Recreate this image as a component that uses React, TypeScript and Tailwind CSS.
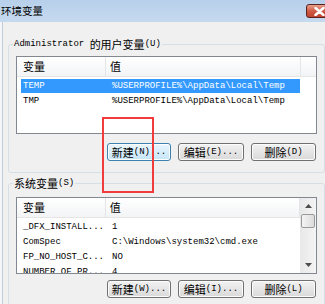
import React from "react";

type Row = { name: string; value: string };

const userRows: Row[] = [
  { name: "TEMP", value: "%USERPROFILE%\\AppData\\Local\\Temp" },
  { name: "TMP", value: "%USERPROFILE%\\AppData\\Local\\Temp" },
];

const sysRows: Row[] = [
  { name: "_DFX_INSTALL...", value: "1" },
  { name: "ComSpec", value: "C:\\Windows\\system32\\cmd.exe" },
  { name: "FP_NO_HOST_C...", value: "NO" },
  { name: "NUMBER_OF_PR...", value: "4" },
];

const mono = "font-['Liberation_Mono',monospace] text-[9px]";
const cjk = "font-['Noto_Sans_CJK_SC',sans-serif] text-[11px]";

function Arrow({ up }: { up?: boolean }) {
  return (
    <svg width="7" height="4" viewBox="0 0 7 4">
      {up ? <path d="M0 4 L3.5 0 L7 4 Z" fill="#4d4d4d" /> : <path d="M0 0 L3.5 4 L7 0 Z" fill="#4d4d4d" />}
    </svg>
  );
}

function ListView({ rows, selected, scroll, tall }: { rows: Row[]; selected?: number; scroll?: boolean; tall?: boolean }) {
  return (
    <div className={`flex w-[301px] overflow-hidden border border-[#828790] bg-white ${tall ? "h-[78px]" : "h-[77px]"}`}>
      <div className="flex min-w-0 flex-1 flex-col">
        <div className="flex h-[20px] shrink-0 border-b border-[#e5e5e5] bg-gradient-to-b from-white to-[#f3f4f6] text-black">
          <div className={`flex w-[89px] items-center border-r border-[#e3e5e8] pl-[6px] ${cjk}`}>变量</div>
          <div className={`flex w-[195px] items-center border-r border-[#e3e5e8] pl-[4px] ${cjk}`}>值</div>
          <div className="flex-1" />
        </div>
        <div className="pt-[2px]">
          {rows.map((r, i) => (
            <div key={r.name} className="flex h-[15px] items-start">
              <div
                className={`ml-[4px] flex h-[14px] w-[279px] shrink-0 items-center leading-[14px] ${mono} ${
                  i === selected ? "bg-[#3399ff] text-white" : "text-black"
                }`}
              >
                <span className="w-[89px] shrink-0 pl-[2px] whitespace-nowrap">{r.name}</span>
                <span className="pl-[2px] whitespace-nowrap">{r.value}</span>
              </div>
            </div>
          ))}
        </div>
      </div>
      {scroll ? (
        <div className="flex w-[16px] shrink-0 flex-col bg-gradient-to-r from-[#e8e8e8] to-[#f4f4f4]">
          <div className="flex h-[16px] items-center justify-center">
            <Arrow up />
          </div>
          <div className="mx-[1px] h-[14px] rounded-[2px] border border-[#9a9a9a] bg-gradient-to-r from-[#f4f4f4] to-[#dcdcdc]" />
          <div className="flex-1" />
          <div className="flex h-[16px] items-center justify-center">
            <Arrow />
          </div>
        </div>
      ) : null}
    </div>
  );
}

function Btn({ label, hot, dots, w, def }: { label: string; hot: string; dots?: boolean; w: string; def?: boolean }) {
  return (
    <div
      className={`flex h-[18px] items-center justify-center rounded-[3px] border ${w} ${
        def
          ? "border-[#3c7fb1] bg-gradient-to-b from-[#eaf6fd] to-[#c4e5f8] shadow-[inset_0_0_0_1px_#ffffff]"
          : "border-[#707070] bg-gradient-to-b from-[#f2f2f2] to-[#d9d9d9] shadow-[inset_0_0_0_1px_#fcfcfc]"
      }`}
    >
      <span className={`${cjk} leading-[14px] text-black`}>{label}</span>
      <span className={`${mono} leading-[14px] text-black`}>
        ({hot}){dots ? "..." : ""}
      </span>
    </div>
  );
}

function Buttons({ keys }: { keys: [string, string, string] }) {
  return (
    <div className="flex justify-end gap-[7px] pr-[1px]">
      <Btn label="新建" hot={keys[0]} dots w="w-[64px]" def={keys[0] === "N"} />
      <Btn label="编辑" hot={keys[1]} dots w="w-[66px]" />
      <Btn label="删除" hot={keys[2]} w="w-[65px]" />
    </div>
  );
}

export default function App() {
  return (
    <div className="relative h-[304px] w-[325px] overflow-hidden bg-[#f3f5f8]">
      <div className="flex h-[22px] items-center bg-gradient-to-b from-[#b7cfea] to-[#c6daef] pl-[1px]">
        <span className="font-['Noto_Sans_CJK_SC',sans-serif] text-[10.5px] text-black">环境变量</span>
      </div>
      <div className="absolute left-[306px] top-[4px] flex h-[14px] w-[34px] items-center rounded-[3px] border border-[#5b2222] bg-gradient-to-b from-[#e8a08e] via-[#cf5a44] to-[#c04530] pl-[7px]">
        <svg width="11" height="9" viewBox="0 0 11 9">
          <path d="M1.5 1 L9.5 8 M9.5 1 L1.5 8" stroke="#ffffff" strokeWidth="2.4" strokeLinecap="round" />
        </svg>
      </div>

      <div className="ml-[2px] h-[282px] w-[340px] border-l border-[#c2ccd6] bg-[#f0f0f0] pl-[5px] pt-[15px]">
        <fieldset className="w-[317px] rounded-[3px] border border-[#d5dfe5] px-[7px] pb-[11px]">
          <legend className="-ml-[3px] flex h-[14px] items-center px-[1px] text-black">
            <span className={`${mono} leading-[14px]`}>Administrator&nbsp;</span>
            <span className={`${cjk} leading-[14px]`}>的用户变量</span>
            <span className={`${mono} leading-[14px]`}>(U)</span>
          </legend>
          <div className="mt-[5px]">
            <ListView rows={userRows} selected={0} tall />
          </div>
          <div className="mt-[9px]">
            <Buttons keys={["N", "E", "D"]} />
          </div>
        </fieldset>

        <fieldset className="mt-[3px] w-[317px] rounded-[3px] border border-[#d5dfe5] px-[7px] pb-[11px]">
          <legend className="-ml-[3px] flex h-[14px] items-center px-[1px] text-black">
            <span className={`${cjk} leading-[14px]`}>系统变量</span>
            <span className={`${mono} leading-[14px]`}>(S)</span>
          </legend>
          <div className="mt-[7px]">
            <ListView rows={sysRows} scroll />
          </div>
          <div className="mt-[6px]">
            <Buttons keys={["W", "I", "L"]} />
          </div>
        </fieldset>
      </div>

      <div className="absolute left-[102px] top-[117px] h-[76px] w-[52px] border-2 border-[#f03c3c]" />
    </div>
  );
}
